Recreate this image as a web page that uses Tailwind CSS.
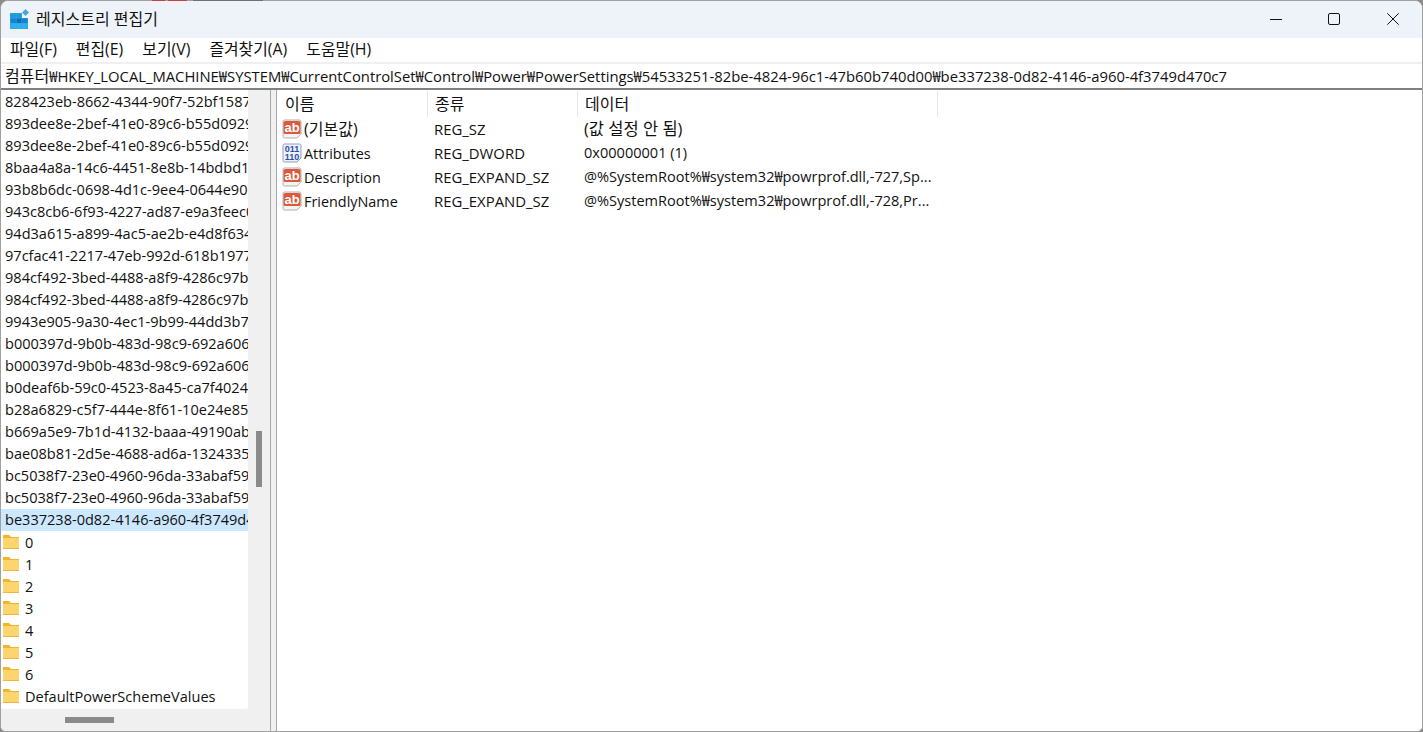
<!DOCTYPE html>
<html lang="ko">
<head>
<meta charset="UTF-8"/>
<script src="https://cdn.jsdelivr.net/npm/@tailwindcss/browser@4"></script>
<title>레지스트리 편집기</title>
</head>
<body class="relative h-[732px] w-[1423px] overflow-hidden bg-[#8a8a8a] font-['Open_Sans','Noto_Sans_CJK_KR',sans-serif] text-[14.4px] text-[#111]">
<div class="flex h-[732px] flex-col overflow-hidden rounded-t-[8px] rounded-b-[6px] border border-[#a0a0a0] bg-[#f0f0f0]">
  <!-- title bar -->
  <div class="flex h-[37px] shrink-0 items-center bg-[#eef3f9] pb-[2px]">
    <svg class="ml-[9px] h-[20px] w-[20px]" viewBox="0 0 20 20">
      <path d="M0 4h12v5h6v11H0z" fill="#3f9fd8"/>
      <rect x=".5" y="4.500" width="5.500" height="4.500" fill="#1c9ce0"/><rect x="6.500" y="4.500" width="5" height="4.500" fill="#1c9ce0"/>
      <rect x=".5" y="9.500" width="5.500" height="4.500" fill="#0f86d2"/><rect x="6.500" y="9.500" width="5" height="4.500" fill="#0a6fb8"/><rect x="12" y="9.500" width="5.500" height="4.500" fill="#0f86d2"/>
      <rect x=".5" y="14.500" width="5.500" height="5" fill="#2bb0f2"/><rect x="6.500" y="14.500" width="5" height="5" fill="#2bb0f2"/><rect x="12" y="14.500" width="5.500" height="5" fill="#2bb0f2"/>
      <path d="M15.500 0l3.500 3.500-3.500 3.500-3.500-3.500z" fill="#4aa6d6"/>
    </svg>
    <span class="ml-[6px] text-[16px]">레지스트리 편집기</span>
    <div class="ml-auto flex items-center">
      <svg class="mr-[46px] h-[12px] w-[12px]" viewBox="0 0 12 12"><path d="M0 6.500h12" stroke="#111" fill="none"/></svg>
      <svg class="mr-[47px] h-[12px] w-[12px]" viewBox="0 0 12 12"><rect x=".5" y=".5" width="11" height="11" rx="1.500" stroke="#111" fill="none"/></svg>
      <svg class="mr-[23px] h-[12px] w-[12px]" viewBox="0 0 12 12"><path d="M.3.3l11.400 11.400M11.700.3L.3 11.700" stroke="#111" fill="none"/></svg>
    </div>
  </div>
  <!-- menu -->
  <div class="flex h-[24px] shrink-0 items-center gap-[19px] bg-white pb-px pl-[9px] text-[15.9px]">
    <span>파일(F)</span><span>편집(E)</span><span>보기(V)</span><span>즐겨찾기(A)</span><span>도움말(H)</span>
  </div>
  <!-- address bar -->
  <div class="mt-[2px] flex h-[24px] shrink-0 items-center whitespace-nowrap bg-white pl-[4px] text-[14.8px]"><span class="text-[16px]">컴퓨터</span>₩HKEY_LOCAL_MACHINE₩SYSTEM₩CurrentControlSet₩Control₩Power₩PowerSettings₩54533251-82be-4824-96c1-47b60b740d00₩be337238-0d82-4146-a960-4f3749d470c7</div>
  <div class="h-[2px] shrink-0 bg-[#808080]"></div>
  <div class="flex min-h-0 flex-1">
    <!-- tree -->
    <div class="flex w-[269px] shrink-0 flex-col bg-[#f0f0f0]">
      <div class="flex min-h-0 flex-1">
        <div class="h-[619px] w-[247px] shrink-0 overflow-hidden rounded-br-[2px] bg-white pt-px text-[14.55px]">
          <div class="flex h-[22px] items-center overflow-hidden whitespace-nowrap pl-[4px]">828423eb-8662-4344-90f7-52bf1587</div>
          <div class="flex h-[22px] items-center overflow-hidden whitespace-nowrap pl-[4px]">893dee8e-2bef-41e0-89c6-b55d0929</div>
          <div class="flex h-[22px] items-center overflow-hidden whitespace-nowrap pl-[4px]">893dee8e-2bef-41e0-89c6-b55d0929</div>
          <div class="flex h-[22px] items-center overflow-hidden whitespace-nowrap pl-[4px]">8baa4a8a-14c6-4451-8e8b-14bdbd1</div>
          <div class="flex h-[22px] items-center overflow-hidden whitespace-nowrap pl-[4px]">93b8b6dc-0698-4d1c-9ee4-0644e90</div>
          <div class="flex h-[22px] items-center overflow-hidden whitespace-nowrap pl-[4px]">943c8cb6-6f93-4227-ad87-e9a3feec0</div>
          <div class="flex h-[22px] items-center overflow-hidden whitespace-nowrap pl-[4px]">94d3a615-a899-4ac5-ae2b-e4d8f634</div>
          <div class="flex h-[22px] items-center overflow-hidden whitespace-nowrap pl-[4px]">97cfac41-2217-47eb-992d-618b1977</div>
          <div class="flex h-[22px] items-center overflow-hidden whitespace-nowrap pl-[4px]">984cf492-3bed-4488-a8f9-4286c97b</div>
          <div class="flex h-[22px] items-center overflow-hidden whitespace-nowrap pl-[4px]">984cf492-3bed-4488-a8f9-4286c97b</div>
          <div class="flex h-[22px] items-center overflow-hidden whitespace-nowrap pl-[4px]">9943e905-9a30-4ec1-9b99-44dd3b7</div>
          <div class="flex h-[22px] items-center overflow-hidden whitespace-nowrap pl-[4px]">b000397d-9b0b-483d-98c9-692a606</div>
          <div class="flex h-[22px] items-center overflow-hidden whitespace-nowrap pl-[4px]">b000397d-9b0b-483d-98c9-692a606</div>
          <div class="flex h-[22px] items-center overflow-hidden whitespace-nowrap pl-[4px]">b0deaf6b-59c0-4523-8a45-ca7f4024</div>
          <div class="flex h-[22px] items-center overflow-hidden whitespace-nowrap pl-[4px]">b28a6829-c5f7-444e-8f61-10e24e85</div>
          <div class="flex h-[22px] items-center overflow-hidden whitespace-nowrap pl-[4px]">b669a5e9-7b1d-4132-baaa-49190ab</div>
          <div class="flex h-[22px] items-center overflow-hidden whitespace-nowrap pl-[4px]">bae08b81-2d5e-4688-ad6a-1324335</div>
          <div class="flex h-[22px] items-center overflow-hidden whitespace-nowrap pl-[4px]">bc5038f7-23e0-4960-96da-33abaf59</div>
          <div class="flex h-[22px] items-center overflow-hidden whitespace-nowrap pl-[4px]">bc5038f7-23e0-4960-96da-33abaf59</div>
          <div class="flex h-[22px] items-center overflow-hidden whitespace-nowrap bg-[#cce8ff] pl-[4px]">be337238-0d82-4146-a960-4f3749d4</div>
          <div class="flex h-[22px] items-center pl-[2px]"><svg class="h-[16px] w-[16px] shrink-0" viewBox="0 0 16 16"><path d="M0 1h6l2 2h8v12H0z" fill="#f4b42a"/><path d="M0 4h16v11H0z" fill="#fdd56f"/><path d="M0 14h16v1H0z" fill="#f0b73c"/></svg><span class="ml-[6px] pt-px">0</span></div>
          <div class="flex h-[22px] items-center pl-[2px]"><svg class="h-[16px] w-[16px] shrink-0" viewBox="0 0 16 16"><path d="M0 1h6l2 2h8v12H0z" fill="#f4b42a"/><path d="M0 4h16v11H0z" fill="#fdd56f"/><path d="M0 14h16v1H0z" fill="#f0b73c"/></svg><span class="ml-[6px] pt-px">1</span></div>
          <div class="flex h-[22px] items-center pl-[2px]"><svg class="h-[16px] w-[16px] shrink-0" viewBox="0 0 16 16"><path d="M0 1h6l2 2h8v12H0z" fill="#f4b42a"/><path d="M0 4h16v11H0z" fill="#fdd56f"/><path d="M0 14h16v1H0z" fill="#f0b73c"/></svg><span class="ml-[6px] pt-px">2</span></div>
          <div class="flex h-[22px] items-center pl-[2px]"><svg class="h-[16px] w-[16px] shrink-0" viewBox="0 0 16 16"><path d="M0 1h6l2 2h8v12H0z" fill="#f4b42a"/><path d="M0 4h16v11H0z" fill="#fdd56f"/><path d="M0 14h16v1H0z" fill="#f0b73c"/></svg><span class="ml-[6px] pt-px">3</span></div>
          <div class="flex h-[22px] items-center pl-[2px]"><svg class="h-[16px] w-[16px] shrink-0" viewBox="0 0 16 16"><path d="M0 1h6l2 2h8v12H0z" fill="#f4b42a"/><path d="M0 4h16v11H0z" fill="#fdd56f"/><path d="M0 14h16v1H0z" fill="#f0b73c"/></svg><span class="ml-[6px] pt-px">4</span></div>
          <div class="flex h-[22px] items-center pl-[2px]"><svg class="h-[16px] w-[16px] shrink-0" viewBox="0 0 16 16"><path d="M0 1h6l2 2h8v12H0z" fill="#f4b42a"/><path d="M0 4h16v11H0z" fill="#fdd56f"/><path d="M0 14h16v1H0z" fill="#f0b73c"/></svg><span class="ml-[6px] pt-px">5</span></div>
          <div class="flex h-[22px] items-center pl-[2px]"><svg class="h-[16px] w-[16px] shrink-0" viewBox="0 0 16 16"><path d="M0 1h6l2 2h8v12H0z" fill="#f4b42a"/><path d="M0 4h16v11H0z" fill="#fdd56f"/><path d="M0 14h16v1H0z" fill="#f0b73c"/></svg><span class="ml-[6px] pt-px">6</span></div>
          <div class="flex h-[22px] items-center pl-[2px]"><svg class="h-[16px] w-[16px] shrink-0" viewBox="0 0 16 16"><path d="M0 1h6l2 2h8v12H0z" fill="#f4b42a"/><path d="M0 4h16v11H0z" fill="#fdd56f"/><path d="M0 14h16v1H0z" fill="#f0b73c"/></svg><span class="ml-[6px] pt-px">DefaultPowerSchemeValues</span></div>
        </div>
        <div class="w-[22px] shrink-0 pl-[8px] pt-[341px]"><div class="h-[56px] w-[6px] bg-[#8a8a8a]"></div></div>
      </div>
      <div class="flex h-[22px] shrink-0 items-center pb-px pl-[64px]"><div class="h-[6px] w-[49px] bg-[#8a8a8a]"></div></div>
    </div>
    <div class="w-[7px] shrink-0 border-x border-[#a8a8a8] bg-[#f0f0f0]"></div>
    <!-- list -->
    <div class="min-w-0 flex-1 bg-white">
      <div class="flex h-[27px] pt-px">
        <div class="flex w-[151px] items-center border-r border-[#e5e5e5] pl-[8px] text-[16px]">이름</div>
        <div class="flex w-[150px] items-center border-r border-[#e5e5e5] pl-[7px] text-[16px]">종류</div>
        <div class="flex w-[360px] items-center border-r border-[#e5e5e5] pl-[7px] text-[16px]">데이터</div>
      </div>
      <div class="flex h-[24px] items-center">
        <div class="flex w-[151px] items-center pl-[5px]"><svg class="h-[20px] w-[20px] shrink-0" viewBox="0 0 20 20"><path d="M1 2.500A1.500 1.500 0 012.500 1h15A1.500 1.500 0 0119 2.500V15l-4 4H2.500A1.500 1.500 0 011 17.500z" fill="#f4f4f4" stroke="#b0b0b0"/><rect x="1.500" y="2" width="17" height="13" rx="1.500" fill="#dc5a3c"/><text x="10" y="13" text-anchor="middle" font-size="13" font-weight="700" fill="#fff" font-family="Liberation Sans">ab</text></svg><span class="ml-[2px] text-[16px]">(기본값)</span></div>
        <div class="w-[150px] pl-[6px] text-[14.9px]">REG_SZ</div><div class="pl-[6px] text-[16.5px]">(값 설정 안 됨)</div>
      </div>
      <div class="flex h-[24px] items-center">
        <div class="flex w-[151px] items-center pl-[5px]"><svg class="h-[20px] w-[20px] shrink-0" viewBox="0 0 20 20"><path d="M1 2.500A1.500 1.500 0 012.500 1h15A1.500 1.500 0 0119 2.500V15l-4 4H2.500A1.500 1.500 0 011 17.500z" fill="#eef1f8" stroke="#8f9fc4"/><text x="10" y="9" text-anchor="middle" font-size="9" font-weight="700" fill="#2a4fa8" font-family="Liberation Sans">011</text><text x="10" y="17" text-anchor="middle" font-size="9" font-weight="700" fill="#2a4fa8" font-family="Liberation Sans">110</text></svg><span class="ml-[2px] pt-px">Attributes</span></div>
        <div class="w-[150px] pl-[6px] text-[14.9px]">REG_DWORD</div><div class="pl-[6px] text-[14.55px]">0x00000001 (1)</div>
      </div>
      <div class="flex h-[24px] items-center">
        <div class="flex w-[151px] items-center pl-[5px]"><svg class="h-[20px] w-[20px] shrink-0" viewBox="0 0 20 20"><path d="M1 2.500A1.500 1.500 0 012.500 1h15A1.500 1.500 0 0119 2.500V15l-4 4H2.500A1.500 1.500 0 011 17.500z" fill="#f4f4f4" stroke="#b0b0b0"/><rect x="1.500" y="2" width="17" height="13" rx="1.500" fill="#dc5a3c"/><text x="10" y="13" text-anchor="middle" font-size="13" font-weight="700" fill="#fff" font-family="Liberation Sans">ab</text></svg><span class="ml-[2px] pt-px">Description</span></div>
        <div class="w-[150px] pl-[6px] text-[14.9px]">REG_EXPAND_SZ</div><div class="pl-[6px] text-[14.55px]">@%SystemRoot%₩system32₩powrprof.dll,-727,Sp...</div>
      </div>
      <div class="flex h-[24px] items-center">
        <div class="flex w-[151px] items-center pl-[5px]"><svg class="h-[20px] w-[20px] shrink-0" viewBox="0 0 20 20"><path d="M1 2.500A1.500 1.500 0 012.500 1h15A1.500 1.500 0 0119 2.500V15l-4 4H2.500A1.500 1.500 0 011 17.500z" fill="#f4f4f4" stroke="#b0b0b0"/><rect x="1.500" y="2" width="17" height="13" rx="1.500" fill="#dc5a3c"/><text x="10" y="13" text-anchor="middle" font-size="13" font-weight="700" fill="#fff" font-family="Liberation Sans">ab</text></svg><span class="ml-[2px] pt-px">FriendlyName</span></div>
        <div class="w-[150px] pl-[6px] text-[14.9px]">REG_EXPAND_SZ</div><div class="pl-[6px] text-[14.55px]">@%SystemRoot%₩system32₩powrprof.dll,-728,Pr...</div>
      </div>
    </div>
  </div>
</div>
<!-- bits of the desktop showing above the window edge -->
<div class="absolute left-[152px] top-0 h-px w-[13px] bg-[#c8403c]"></div>
<div class="absolute left-[168px] top-0 h-px w-[19px] bg-[#c8403c]"></div>
<div class="absolute left-[193px] top-0 h-px w-[70px] bg-[#707070]"></div>
</body>
</html>
